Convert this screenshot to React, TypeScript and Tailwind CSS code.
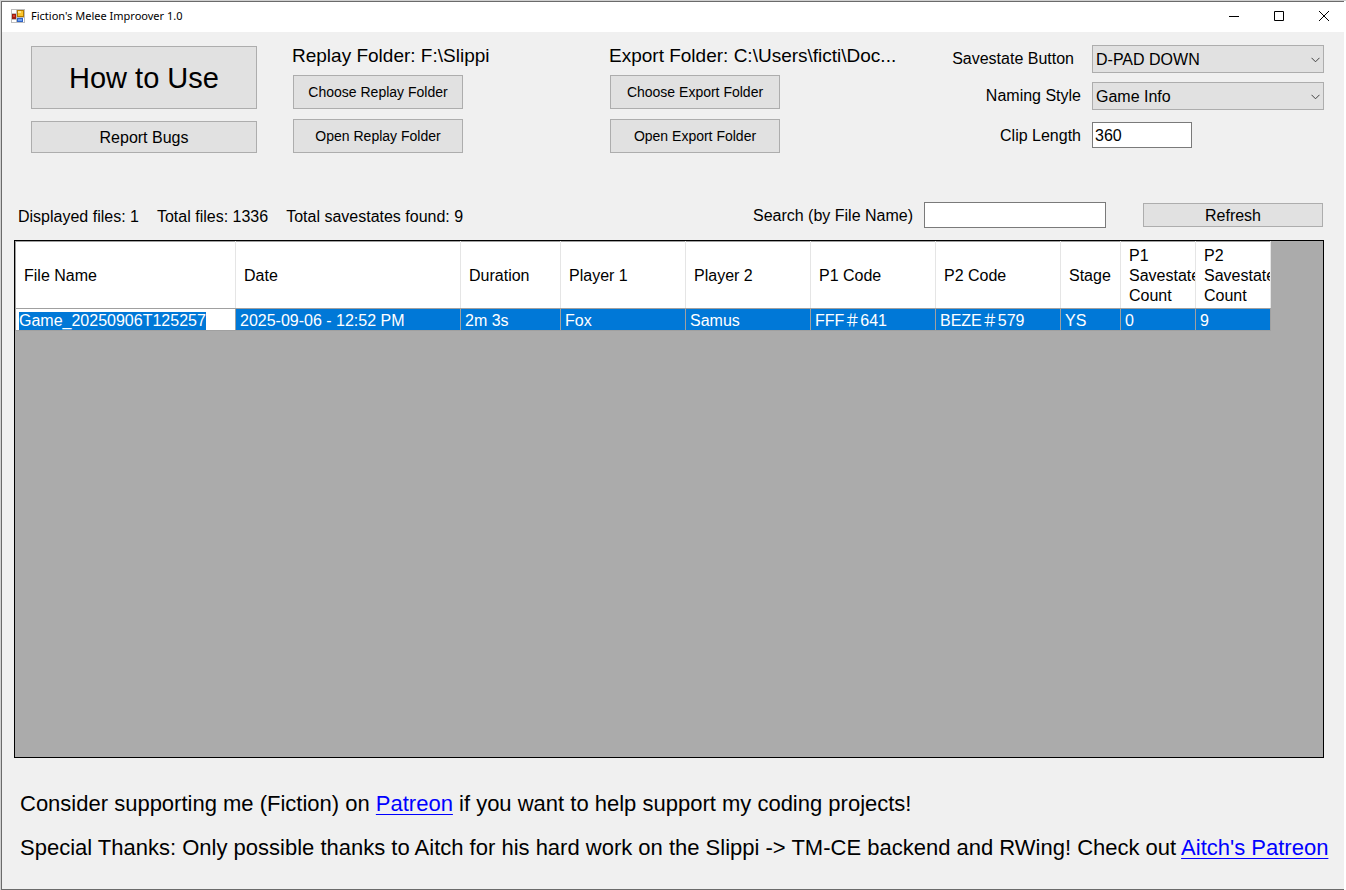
import { useEffect, useRef } from "react";
import type { ReactNode } from "react";

const columns = [
  { title: "File Name", width: "w-[220px]" },
  { title: "Date", width: "w-[225px]" },
  { title: "Duration", width: "w-[100px]" },
  { title: "Player 1", width: "w-[125px]" },
  { title: "Player 2", width: "w-[125px]" },
  { title: "P1 Code", width: "w-[125px]" },
  { title: "P2 Code", width: "w-[125px]" },
  { title: "Stage", width: "w-[60px]" },
  { title: "P1 Savestate Count", width: "w-[75px]" },
  { title: "P2 Savestate Count", width: "w-[75px]" },
];

const replay = {
  fileName: "Game_20250906T125257",
  values: ["2025-09-06 - 12:52 PM", "2m 3s", "Fox", "Samus", "FFF＃641", "BEZE＃579", "YS", "0", "9"],
};

function PushButton({ className, children }: { className: string; children: ReactNode }) {
  return (
    <button type="button" className={`flex items-center justify-center border border-[#adadad] bg-[#e1e1e1] ${className}`}>
      {children}
    </button>
  );
}

function FolderPanel({ className, kind, path }: { className: string; kind: string; path: string }) {
  return (
    <section className={className}>
      <h2 className="-ml-px h-[29px] whitespace-nowrap text-[19px] leading-5">
        {kind} Folder: {path}
      </h2>
      <div className="flex w-[170px] flex-col gap-2.5">
        <PushButton className="h-[34px] text-sm">Choose {kind} Folder</PushButton>
        <PushButton className="h-[34px] text-sm">Open {kind} Folder</PushButton>
      </div>
    </section>
  );
}

function DropDown({ id, value }: { id: string; value: string }) {
  return (
    <div className="grid w-[232px]">
      <select
        id={id}
        defaultValue={value}
        className="col-start-1 row-start-1 h-7 appearance-none rounded-none border border-[#adadad] bg-[#e1e1e1] pl-[3px] pr-6 pt-0.5"
      >
        <option>{value}</option>
      </select>
      <svg
        aria-hidden="true"
        viewBox="0 0 9 6"
        className="pointer-events-none col-start-1 row-start-1 mr-1 mt-0.5 h-1.5 w-[9px] self-center justify-self-end"
        fill="none"
        stroke="#404040"
      >
        <path d="M.5 .8 4.5 4.8 8.5 .8" />
      </svg>
    </div>
  );
}

function TitleBar() {
  return (
    <header className="-mr-0.5 flex h-[30px] items-center bg-white pb-0.5">
      <svg viewBox="0 0 14 14" className="ml-[9px] size-3.5" aria-hidden="true" shapeRendering="crispEdges">
        <path fill="#bdbdbd" d="M0 0h14v14H0z" />
        <path fill="#fff" d="M1 1h4v3H1zM1 11h4v2H1zM12 9h1v4h-1z" />
        <path fill="#9c1c12" d="M1 5h4v5H1z" />
        <path fill="#d8402e" d="M2 6h2v2H2z" />
        <path fill="#b37a00" d="M6 1h7v7H6z" />
        <path fill="#fbc62d" d="M7 2h5v5H7z" />
        <path fill="#ffe48a" d="M7 2h3v2H7z" />
        <path fill="#2f62c4" d="M6 9h6v4H6z" />
        <path fill="#6ea2f2" d="M7 10h4v2H7z" />
      </svg>
      <h1 className="ml-1.5 flex-1 font-['Noto_Sans',sans-serif] text-[11px]">Fiction's Melee Improover 1.0</h1>
      <div className="flex h-full">
        <button type="button" aria-label="Minimize" className="grid w-[45px] place-items-center">
          <svg viewBox="0 0 10 10" className="size-2.5" shapeRendering="crispEdges">
            <path d="M0 5h10v1H0z" />
          </svg>
        </button>
        <button type="button" aria-label="Maximize" className="grid w-[45px] place-items-center">
          <svg viewBox="0 0 10 10" className="size-2.5" fill="none" stroke="#000">
            <path d="M.5 .5h9v9h-9z" />
          </svg>
        </button>
        <button type="button" aria-label="Close" className="grid w-[45px] place-items-center">
          <svg viewBox="0 0 10 10" className="size-2.5" stroke="#000">
            <path d="M0 0 10 10M10 0 0 10" />
          </svg>
        </button>
      </div>
    </header>
  );
}

function ReplayTable() {
  const nameRef = useRef<HTMLInputElement>(null);

  useEffect(() => {
    nameRef.current?.focus();
    nameRef.current?.select();
  }, []);

  return (
    <div className="ml-3 mr-5 flex-1 overflow-x-auto border border-black bg-[#ababab]">
      <table className="w-[1256px] table-fixed border-collapse border border-[#a0a0a0] text-left leading-5">
        <thead>
          <tr className="h-[67px] bg-white">
            {columns.map((column) => (
              <th
                key={column.title}
                scope="col"
                className={`${column.width} border-r border-b border-r-[#e5e5e5] border-b-[#a0a0a0] p-0 pl-2 pt-0.5 font-normal`}
              >
                <div className="overflow-hidden">{column.title}</div>
              </th>
            ))}
          </tr>
        </thead>
        <tbody>
          <tr className="h-[22px] bg-[#0078d7] leading-[19px] text-white">
            <td className="border border-[#a0a0a0] bg-white p-0">
              <input
                ref={nameRef}
                aria-label="File name"
                defaultValue={replay.fileName}
                className="block h-[21px] w-full pl-[3px] pt-0.5 text-black outline-none selection:bg-[#0078d7] selection:text-white"
              />
            </td>
            {replay.values.map((value, index) => (
              <td key={index} className="whitespace-nowrap border border-[#a0a0a0] p-0 pl-1 pt-0.5">
                {value}
              </td>
            ))}
          </tr>
        </tbody>
      </table>
    </div>
  );
}

export default function App() {
  return (
    <div className="flex min-h-screen flex-col overflow-x-hidden border-l border-t border-[#d0d0d0] bg-white pr-0.5 font-['Liberation_Sans','Noto_Sans_CJK_JP',sans-serif] text-base text-black">
      <div className="flex flex-1 flex-col border border-r-0 border-[#6b6b6b] bg-[#f0f0f0]">
        <TitleBar />
        <main className="flex flex-1 flex-col">
          <div className="flex h-[171px] items-start pl-[29px] pr-5 pt-3.5">
            <div className="flex w-[226px] flex-col gap-3">
              <PushButton className="h-[63px] pt-0.5 text-[29px]">How to Use</PushButton>
              <PushButton className="h-8 pt-0.5">Report Bugs</PushButton>
            </div>
            <FolderPanel className="ml-9 w-[317px]" kind="Replay" path="F:\Slippi" />
            <FolderPanel className="flex-1" kind="Export" path="C:\Users\ficti\Doc..." />
            <form className="flex flex-col">
              <div className="-mt-px flex h-[37px] items-start justify-end gap-[18px]">
                <label htmlFor="savestate" className="leading-7">Savestate Button</label>
                <DropDown id="savestate" value="D-PAD DOWN" />
              </div>
              <div className="flex h-10 items-start justify-end gap-[11px]">
                <label htmlFor="naming" className="leading-7">Naming Style</label>
                <DropDown id="naming" value="Game Info" />
              </div>
              <div className="flex items-start justify-end gap-[11px]">
                <label htmlFor="clip" className="leading-7">Clip Length</label>
                <div className="w-[232px]">
                  <input id="clip" defaultValue="360" className="block h-[26px] w-[100px] border border-[#7a7a7a] bg-white px-0.5 pt-0.5" />
                </div>
              </div>
            </form>
          </div>
          <div className="flex h-[37px] items-start pl-4 pr-[21px]">
            <div className="flex flex-1 gap-[18px] leading-7">
              <span>Displayed files: 1</span>
              <span>Total files: 1336</span>
              <span>Total savestates found: 9</span>
            </div>
            <label htmlFor="search" className="mr-[11px] leading-[26px]">Search (by File Name)</label>
            <input id="search" className="-mt-px mr-[37px] h-[26px] w-[182px] border border-[#7a7a7a] bg-white px-0.5" />
            <PushButton className="h-6 w-[180px] pt-0.5">Refresh</PushButton>
          </div>
          <ReplayTable />
          <footer className="flex flex-col gap-4 whitespace-nowrap pb-[27px] pl-[18px] pt-8 text-[22px] leading-7">
            <p>
              Consider supporting me (Fiction) on{" "}
              <a href="#patreon" className="text-[#0000ff] underline decoration-1 underline-offset-3">Patreon</a> if you want to help support my coding projects!
            </p>
            <p>
              Special Thanks: Only possible thanks to Aitch for his hard work on the Slippi -&gt; TM-CE backend and RWing! Check out{" "}
              <a href="#aitch" className="text-[#0000ff] underline decoration-1 underline-offset-3">Aitch's Patreon</a>
            </p>
          </footer>
        </main>
      </div>
    </div>
  );
}
